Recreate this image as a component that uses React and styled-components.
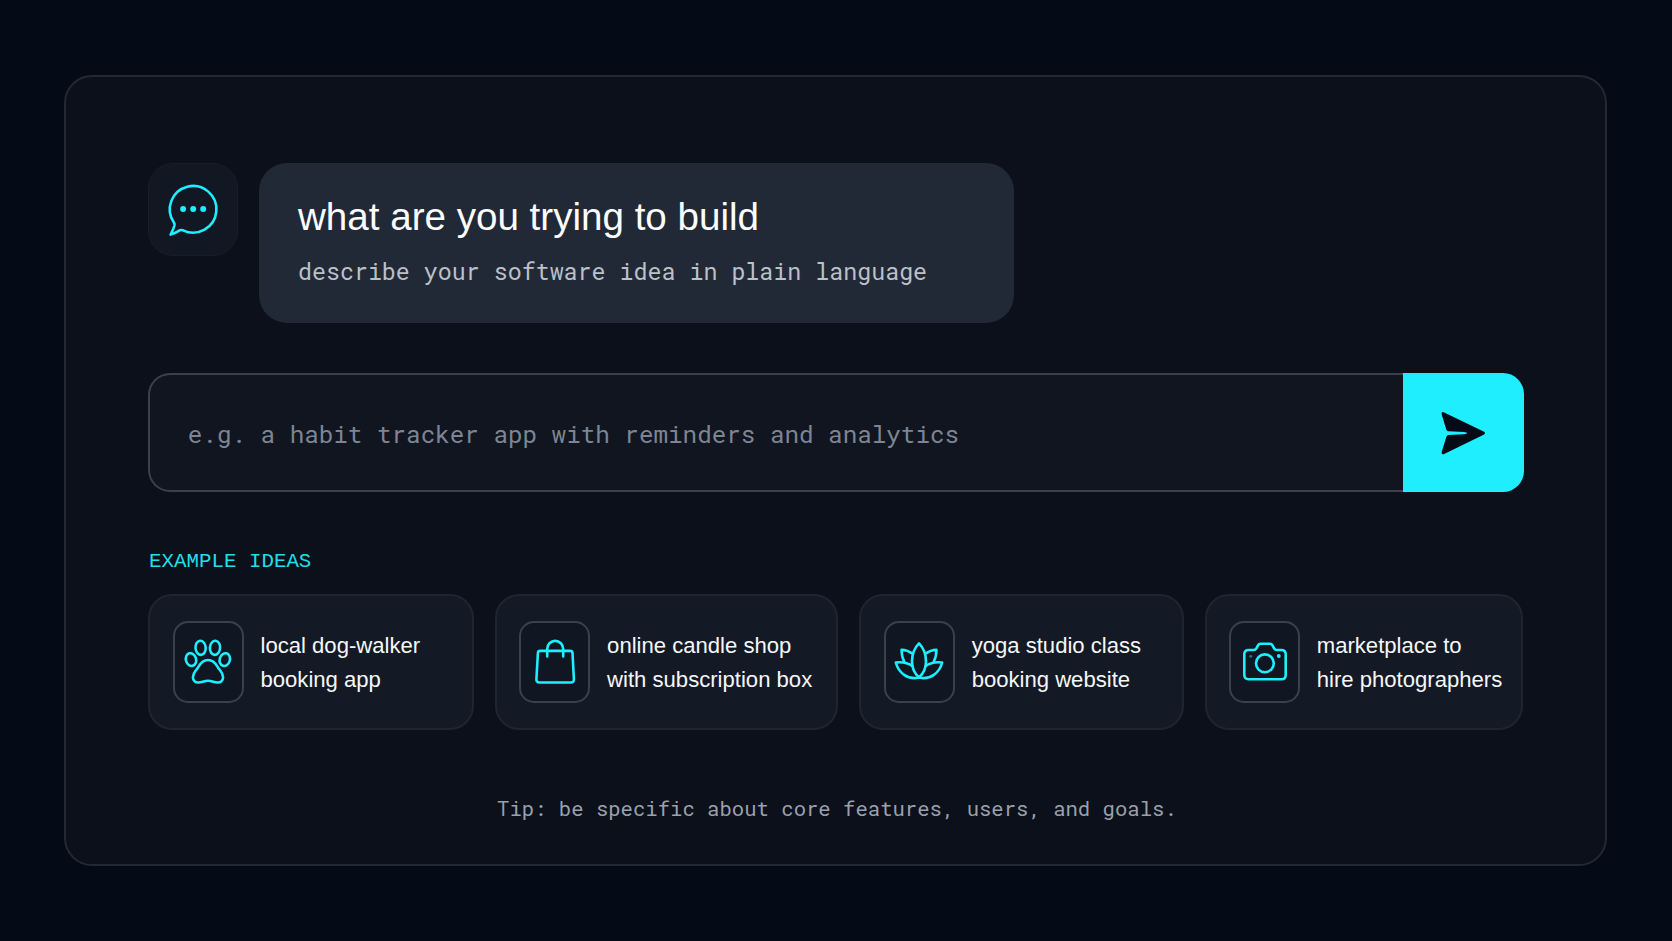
import React from "react";
import styled, { createGlobalStyle } from "styled-components";

const CYAN = "#1eeeff";
const SANS = '"Liberation Sans", Arial, sans-serif';
const MONO = '"Roboto Mono", "Liberation Mono", monospace';

const GlobalStyle = createGlobalStyle`
  *, *::before, *::after { box-sizing: border-box; }
  body { margin: 0; background: #040a16; font-family: ${SANS}; }
  p, h1, h2 { margin: 0; font-weight: 400; }
`;

const Page = styled.main`
  min-height: 941px;
  display: flex;
  justify-content: center;
  align-items: flex-start;
  padding: 75px 1px 0 0;
`;

const Panel = styled.section`
  width: 1543px;
  height: 791px;
  padding: 86px 81.5px 0 82.3px;
  border: 2px solid #232932;
  border-radius: 28px;
  background: #0b101b;
  display: flex;
  flex-direction: column;
`;

const Prompt = styled.div`
  display: flex;
  align-items: flex-start;
  gap: 20.7px;
`;

const Avatar = styled.div`
  width: 90px;
  height: 93px;
  border-radius: 25px;
  border: 1px solid #181e28;
  background: #121823;
  display: grid;
  place-items: center;
`;

const Bubble = styled.div`
  width: 755px;
  height: 160px;
  padding: 32px 39px;
  border-radius: 28px;
  background: #222936;
`;

const Title = styled.h1`
  font-size: 38.6px;
  line-height: 44px;
  color: #fcfdff;
`;

const Subtitle = styled.p`
  margin-top: 16px;
  font: 400 23.3px/32px ${MONO};
  color: #bcc0c8;
  white-space: nowrap;
`;

const Composer = styled.form`
  display: flex;
  height: 119px;
  margin-top: 50px;
`;

const Field = styled.div`
  flex: 1;
  display: flex;
  align-items: center;
  padding: 2px 0 0 37.5px;
  border: 2px solid #3a414e;
  border-right: 0;
  border-radius: 22px 0 0 22px;
  background: #10151f;
  font: 400 24.25px/32px ${MONO};
  color: #7d8594;
`;

const SendButton = styled.button`
  width: 121px;
  padding: 0;
  border: 0;
  border-radius: 0 21px 21px 0;
  background: ${CYAN};
  color: #050b16;
  display: grid;
  place-items: center;
`;

const SectionLabel = styled.h2`
  margin-top: 58px;
  padding-left: 0.8px;
  font: 400 20.8px/24px "Liberation Mono", monospace;
  color: #1fdfe9;
`;

const Ideas = styled.div`
  display: grid;
  grid-template-columns: 325.5fr 343.5fr 325fr 318.5fr;
  column-gap: 21px;
  margin-top: 20px;
`;

const IdeaCard = styled.article`
  height: 136px;
  padding: 0 0 0 ${({ $inset }) => $inset}px;
  display: flex;
  align-items: center;
  gap: 16.7px;
  border: 2px solid #1f2530;
  border-radius: 24px;
  background: #141a25;
`;

const IconTile = styled.div`
  flex: none;
  width: 71px;
  height: 82px;
  border: 2px solid #3a404d;
  border-radius: 15px;
  background: #111722;
  display: grid;
  place-items: center;
`;

const IdeaText = styled.p`
  padding-top: 1px;
  font-size: 22.1px;
  line-height: 34px;
  color: #f6f7f9;
  white-space: pre-line;
`;

const Tip = styled.p`
  margin-top: 63px;
  padding-left: 2px;
  text-align: center;
  font: 400 20.6px/30px ${MONO};
  color: #9ba0ac;
`;

const LineSvg = styled.svg`
  display: block;
  overflow: visible;
  fill: none;
  stroke: ${CYAN};
  stroke-width: 2.6;
  stroke-linecap: round;
  stroke-linejoin: round;
`;

const ChatIcon = () => (
  <LineSvg width="54" height="54" viewBox="0 0 54 54">
    <path d="M7.9 39.5A23.3 23.3 0 1 1 17 47.3Q15.500 46.700 14 47.200Q9.500 50.200 4.600 51.600Q7.400 46.500 8.500 42.200Q8.800 40.800 7.900 39.500Z" />
    <g fill={CYAN} stroke="none">
      <circle cx="17.1" cy="26.1" r="3" />
      <circle cx="27.2" cy="26.1" r="3" />
      <circle cx="37.2" cy="26.1" r="3" />
    </g>
  </LineSvg>
);

const SendIcon = () => (
  <svg width="48" height="48" viewBox="0 0 48 48" fill="currentColor">
    <path d="M5.2 3.4L44.6 22.5Q47.6 24 44.6 25.700L5.2 45Q2 46 2.700 42.900L7.300 28Q7.900 26.200 9.600 26.100L25 25.300Q31.500 24.100 25 22.900L9.600 22.300Q7.900 22.200 7.300 20.400L2.700 5.500Q2 2.300 5.200 3.400Z" />
  </svg>
);

const PawIcon = () => (
  <LineSvg width="48" height="48" viewBox="0 0 48 48">
    <ellipse cx="7" cy="21.6" rx="5.1" ry="6.5" transform="rotate(-16 7 21.6)" />
    <ellipse cx="16.6" cy="9.8" rx="5.1" ry="7.1" transform="rotate(-5 16.6 9.8)" />
    <ellipse cx="31" cy="9.8" rx="5.1" ry="7.1" transform="rotate(5 31 9.8)" />
    <ellipse cx="40.8" cy="21.6" rx="5.1" ry="6.5" transform="rotate(16 40.8 21.6)" />
    <path d="M24 22c-5 0-7.5 3.2-9.6 6.8C12 33 8.9 34.4 8.9 39.3c0 3.6 2.6 5.4 5.6 5.2 3.5-.3 6-1.7 9.5-1.7s6 1.4 9.5 1.7c3 .2 5.6-1.6 5.6-5.2 0-4.9-3.1-6.3-5.5-10.5C31.5 25.2 29 22 24 22z" />
  </LineSvg>
);

const BagIcon = () => (
  <LineSvg width="48" height="48" viewBox="0 0 48 48">
    <path d="M9.2 12.9H39.2Q41.3 12.9 41.5 15L42.9 41.2Q43 44.5 39.8 44.5H8.5Q5.3 44.5 5.4 41.2L6.9 15Q7.1 12.9 9.2 12.9Z" />
    <path d="M16.2 18.5V10.9a8 8 0 0 1 16 0V18.5" />
  </LineSvg>
);

const LotusIcon = () => (
  <LineSvg width="48" height="48" viewBox="0 0 48 48">
    <path d="M24 5.3C19.5 9.8 17 16 17 23.5S19.5 35.5 24 39.4C28.5 35.5 31 31 31 23.5S28.5 9.8 24 5.3Z" />
    <path d="M17.6 15.7Q12.5 12 6.6 11.8Q6.5 18.5 9.2 23.6" />
    <path d="M30.4 15.7Q35.5 12 41.4 11.8Q41.5 18.5 38.8 23.6" />
    <path d="M17.6 28.2Q10.5 23.2 .8 24.5C3.5 34.5 12.5 42.5 24 39.4" />
    <path d="M30.4 28.2Q37.5 23.2 47.2 24.5C44.5 34.5 35.5 42.5 24 39.4" />
  </LineSvg>
);

const CameraIcon = () => (
  <LineSvg width="48" height="48" viewBox="0 0 48 48">
    <path d="M7.5 12H12.5Q14.5 12 15.4 10.3L17 7.3Q17.8 5.8 19.5 5.8H29Q30.7 5.8 31.5 7.3L33.1 10.3Q34 12 36 12H40.4Q44.7 12 44.7 16.3V37Q44.7 41.2 40.4 41.2H7.5Q3.3 41.2 3.3 37V16.3Q3.3 12 7.5 12Z" />
    <circle cx="23.9" cy="25.3" r="8.9" />
    <circle cx="37.8" cy="18" r="1.9" fill={CYAN} stroke="none" />
    <circle cx="9.8" cy="18.2" r="1.5" fill={CYAN} stroke="none" opacity="0.45" />
  </LineSvg>
);

const ideas = [
  { text: "local dog-walker\nbooking app", Icon: PawIcon, inset: 22.5 },
  { text: "online candle shop\nwith subscription box", Icon: BagIcon, inset: 22.7 },
  { text: "yoga studio class\nbooking website", Icon: LotusIcon, inset: 22.8 },
  { text: "marketplace to\nhire photographers", Icon: CameraIcon, inset: 22 },
];

export default function App() {
  return (
    <>
      <GlobalStyle />
      <Page>
        <Panel>
          <Prompt>
            <Avatar><ChatIcon /></Avatar>
            <Bubble>
              <Title>what are you trying to build</Title>
              <Subtitle>describe your software idea in plain language</Subtitle>
            </Bubble>
          </Prompt>
          <Composer>
            <Field>e.g. a habit tracker app with reminders and analytics</Field>
            <SendButton type="button" aria-label="Send"><SendIcon /></SendButton>
          </Composer>
          <SectionLabel>EXAMPLE IDEAS</SectionLabel>
          <Ideas>
            {ideas.map(({ text, Icon, inset }) => (
              <IdeaCard key={text} $inset={inset}>
                <IconTile><Icon /></IconTile>
                <IdeaText>{text}</IdeaText>
              </IdeaCard>
            ))}
          </Ideas>
          <Tip>Tip: be specific about core features, users, and goals.</Tip>
        </Panel>
      </Page>
    </>
  );
}
